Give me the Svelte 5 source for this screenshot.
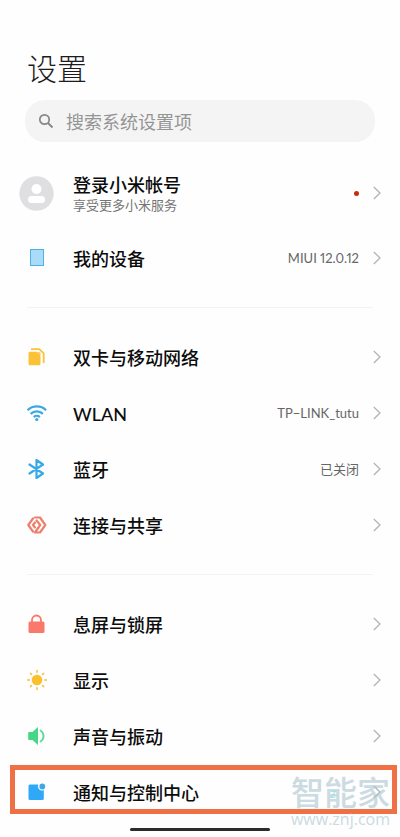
<script lang="ts">
    type Item = {
        icon: string;
        title: string;
        subtitle?: string;
        value?: string;
        dot?: boolean;
        highlighted?: boolean;
    };

    const groups: Item[][] = [
        [
            { icon: 'avatar', title: '登录小米帐号', subtitle: '享受更多小米服务', dot: true },
            { icon: 'device', title: '我的设备', value: 'MIUI 12.0.12' },
        ],
        [
            { icon: 'sim', title: '双卡与移动网络' },
            { icon: 'wifi', title: 'WLAN', value: 'TP−LINK_tutu' },
            { icon: 'bluetooth', title: '蓝牙', value: '已关闭' },
            { icon: 'share', title: '连接与共享' },
        ],
        [
            { icon: 'lock', title: '息屏与锁屏' },
            { icon: 'sun', title: '显示' },
            { icon: 'sound', title: '声音与振动' },
            { icon: 'notify', title: '通知与控制中心', highlighted: true },
        ],
    ];

    const rays = [0, 45, 90, 135, 180, 225, 270, 315];

    let query = $state('');
</script>

{#snippet icon(name: string)}
    {#if name === 'avatar'}
        <svg width="35" height="35" viewBox="0 0 35 35" aria-hidden="true">
            <circle cx="17.5" cy="17.5" r="17.2" fill="#dfdfe2" />
            <circle cx="17.5" cy="13" r="5" fill="#fff" />
            <rect x="9" y="20" width="17" height="7" rx="3.5" fill="#fff" />
        </svg>
    {:else}
        <svg width="20" height="20" viewBox="0 0 20 20" aria-hidden="true">
            {#if name === 'device'}
                <rect x="3.5" y="1.5" width="13" height="16" fill="#a9dcfb" stroke="#4fb0e4" />
            {:else if name === 'sim'}
                <path d="M3 4.800h6.500l4 3.700v8.300a1.500 1.500 0 0 1-1.500 1.500H3a1.500 1.500 0 0 1-1.500-1.500V6.300A1.500 1.500 0 0 1 3 4.800z" fill="#fcc237" />
                <path d="M10 5l3.500 3.500v-3z" fill="#fcc237" />
                <path d="M4 2.200h8.300l4.400 4.200V16" fill="none" stroke="#fcc237" stroke-width="1.800" stroke-linejoin="round" />
            {:else if name === 'wifi'}
                <g fill="none" stroke="#36a9e6" stroke-width="2.200">
                    <path d="M.5 7.200a13.300 13.300 0 0 1 18.600 0" />
                    <path d="M3.700 10.900a8.700 8.700 0 0 1 12.200 0" />
                    <path d="M6.800 14.100a4.400 4.400 0 0 1 6 0" />
                </g>
                <circle cx="9.800" cy="16.500" r="1.600" fill="#36a9e6" />
            {:else if name === 'bluetooth'}
                <path d="M2.500 5.500l13.500 9L9.500 19V1L16 5.500l-13.500 9" fill="none" stroke="#36a9e6" stroke-width="2.200" stroke-linejoin="round" stroke-linecap="round" />
            {:else if name === 'share'}
                <g fill="none" stroke="#ee7f6c" stroke-width="2.200" stroke-linejoin="round" stroke-linecap="round">
                    <path d="M8 2.500H13L18.300 10 13 17.500H8L13.200 10 9.500 5.500" />
                    <path d="M6 3.500L1.300 10 6 16.500" />
                    <path d="M8 7.500L6 10l2 2.500" />
                </g>
            {:else if name === 'lock'}
                <path d="M5 9V6a4.500 4.500 0 0 1 9 0v3" fill="none" stroke="#f9796b" stroke-width="1.800" />
                <rect x="1.500" y="7.500" width="16" height="11.500" rx="1.500" fill="#f9796b" />
            {:else if name === 'sun'}
                <circle cx="10" cy="10" r="5.300" fill="#fbc02d" />
                {#each rays as angle}
                    <path d="M10 .8v1.200" stroke="#f6c75a" stroke-width="1.800" stroke-linecap="round" transform="rotate({angle} 10 10)" />
                {/each}
            {:else if name === 'sound'}
                <path d="M2 6h3.500L11 1v18l-5.500-5H2a.8.8 0 0 1-.8-.8V6.800A.8.8 0 0 1 2 6z" fill="#43d787" />
                <path d="M13.500 4.500a6.500 6.500 0 0 1 0 11" fill="none" stroke="#5fdc9a" stroke-width="1.900" stroke-linecap="round" />
            {:else if name === 'notify'}
                <path d="M3 2.500h8.300a4.100 4.100 0 0 0 5.500 5.500v8.500a1.500 1.500 0 0 1-1.500 1.500H3a1.500 1.500 0 0 1-1.500-1.500V4A1.500 1.500 0 0 1 3 2.500z" fill="#2fa8f8" />
                <circle cx="15.300" cy="4.500" r="2.900" fill="#3fa6ea" />
            {/if}
        </svg>
    {/if}
{/snippet}

<main class="settings">
    <h1>设置</h1>

    <label class="search">
        <svg width="16" height="16" viewBox="0 0 16 16" aria-hidden="true">
            <circle cx="6.500" cy="6.500" r="4.700" fill="none" stroke="#868686" stroke-width="1.700" />
            <path d="M10 10l4.500 4.500" stroke="#868686" stroke-width="1.800" />
        </svg>
        <input type="text" placeholder="搜索系统设置项" aria-label="搜索系统设置项" bind:value={query} />
    </label>

    {#each groups as items}
        <ul class="group">
            {#each items as item}
                <li class="entry" class:entry--highlighted={item.highlighted}>
                    <button type="button" class="row" class:row--account={item.subtitle}>
                        <span class="row-icon">{@render icon(item.icon)}</span>
                        <span class="row-text">
                            <span class="row-title">{item.title}</span>
                            {#if item.subtitle}
                                <span class="row-subtitle">{item.subtitle}</span>
                            {/if}
                        </span>
                        {#if item.value}
                            <span class="row-value">{item.value}</span>
                        {/if}
                        {#if item.dot}
                            <span class="row-dot"></span>
                        {/if}
                        <svg class="chevron" width="8" height="14" viewBox="0 0 8 14" aria-hidden="true">
                            <path d="M.8 1l6.200 6-6.200 6" fill="none" stroke="#b4b4b4" stroke-width="1.300" />
                        </svg>
                    </button>
                </li>
            {/each}
        </ul>
    {/each}

    <div class="home-bar"></div>

    <div class="watermark">
        <span class="watermark-name">智能家</span>
        <span class="watermark-url">www.znj.com</span>
        <span class="watermark-z">Z</span>
    </div>
</main>

<style>
    :global(body) {
        background: #fefefe;
    }

    .settings {
        position: relative;
        padding: 44px 0 6px;
        font-family: Lato, "Noto Sans CJK SC", sans-serif;
        color: #0c0c0c;
    }

    h1 {
        margin: 0 27px 8px;
        font-size: 30px;
        line-height: 48px;
        font-weight: 300;
        color: #1c1c1c;
    }

    .search {
        display: flex;
        align-items: center;
        gap: 12px;
        height: 42px;
        margin: 0 25px 14px;
        padding: 0 13px;
        border-radius: 20px;
        background: #f4f4f4;
    }

    .search input {
        flex: 1;
        min-width: 0;
        padding: 2px 0 0;
        border: 0;
        outline: 0;
        background: none;
        font: inherit;
        font-size: 18px;
        color: #333;
    }

    .search input::placeholder {
        color: #949494;
        opacity: 1;
    }

    .group {
        margin: 0;
        padding: 0;
        list-style: none;
    }

    .group + .group::before {
        content: "";
        display: block;
        height: 1px;
        margin: 21px 27px;
        background: #f3f3f3;
    }

    .entry {
        position: relative;
    }

    .entry--highlighted::after {
        content: "";
        position: absolute;
        inset: 1px 3px 6px 10px;
        border: 5px solid #f07045;
        pointer-events: none;
    }

    .row {
        display: flex;
        align-items: center;
        gap: 14px;
        width: 100%;
        height: 56px;
        padding: 0 19px 0 16px;
        border: 0;
        background: none;
        font: inherit;
        color: inherit;
        text-align: left;
        cursor: pointer;
    }

    .row--account {
        height: 74px;
    }

    .row-icon {
        display: flex;
        justify-content: center;
        width: 41px;
        margin-right: 2px;
    }

    .row-text {
        display: flex;
        flex: 1;
        flex-direction: column;
        padding-top: 2px;
    }

    .row-title {
        font-size: 18px;
        line-height: 22px;
        font-weight: 500;
    }

    .row-subtitle {
        font-size: 13px;
        line-height: 18px;
        color: #757575;
    }

    .row-value {
        font-size: 13px;
        line-height: 18px;
        font-variant-numeric: proportional-nums;
        color: #666;
    }

    .row-dot {
        width: 5px;
        height: 5px;
        border-radius: 50%;
        background: #c92a10;
    }

    .chevron {
        flex: none;
    }

    .home-bar {
        width: 35%;
        height: 3px;
        margin: 8px auto 0;
        border-radius: 2px;
        background: #2b2b2b;
    }

    .watermark {
        position: absolute;
        right: 10px;
        bottom: 9px;
        display: flex;
        flex-direction: column;
        align-items: center;
        color: #a9c4ce;
        opacity: 0.6;
        pointer-events: none;
    }

    .watermark-name {
        font-size: 33px;
        line-height: 36px;
        font-weight: 500;
    }

    .watermark-url {
        font-family: "Open Sans", sans-serif;
        font-size: 16px;
        line-height: 18px;
    }

    .watermark-z {
        position: absolute;
        top: 14px;
        left: 39px;
        font-size: 10px;
        font-style: italic;
        color: #3fd5e0;
    }
</style>
